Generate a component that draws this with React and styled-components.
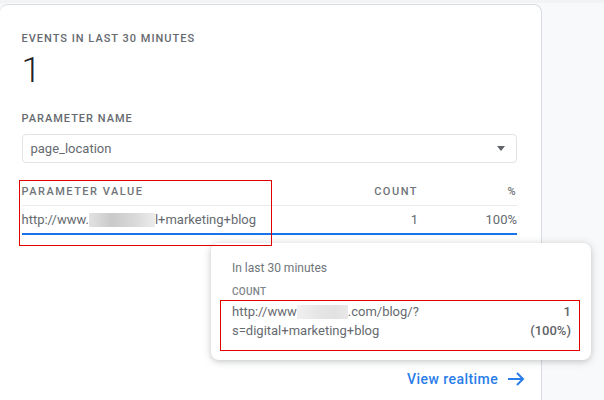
import React from "react";
import styled, { createGlobalStyle } from "styled-components";

const Global = createGlobalStyle`
  html, body { margin: 0; padding: 0; background: #f8f9fa; overflow: hidden; }
  body { font-family: Roboto, "Liberation Sans", sans-serif; width: 604px; height: 400px; }
`;

const Page = styled.div`
  position: relative;
  width: 604px;
  height: 400px;
  overflow: hidden;
  background: #f8f9fa;
  border-top: 3px solid #f1f3f4;
  box-sizing: border-box;
`;

const Card = styled.section`
  box-sizing: border-box;
  width: 542px;
  height: 420px;
  margin: 1px 0 0 0;
  padding: 27px 24px 0 21.5px;
  background: #fff;
  border: 1px solid #dadce0;
  border-left: 0;
  border-radius: 8px;
  display: flex;
  flex-direction: column;
`;

const Label = styled.div`
  font-size: 11px;
  line-height: 14px;
  font-weight: 500;
  letter-spacing: 1px;
  color: #666a6f;
  text-transform: uppercase;
`;

const BigNumber = styled.div`
  font-size: 35px;
  line-height: 40px;
  font-weight: 300;
  color: #202124;
  margin: 5px 0 21px;
`;

const Select = styled.div`
  box-sizing: border-box;
  height: 29px;
  margin-top: 8px;
  padding: 0 11px 0 8px;
  display: flex;
  align-items: center;
  justify-content: space-between;
  border: 1px solid #e1e3e6;
  border-radius: 4px;
  font-size: 13px;
  color: #666a6f;
`;

const Caret = styled.span`
  width: 0;
  height: 0;
  border-left: 4.5px solid transparent;
  border-right: 4.5px solid transparent;
  border-top: 5px solid #5f6368;
`;

const Table = styled.div`
  margin-top: 14px;
  display: flex;
  flex-direction: column;
`;

const HeadRow = styled.div`
  display: grid;
  grid-template-columns: 1fr 70px 99px;
  align-items: center;
  height: 28px;
  border-bottom: 1px solid #e8eaed;
`;

const BodyRow = styled.div`
  display: grid;
  grid-template-columns: 1fr 70px 99px;
  align-items: center;
  height: 27px;
  border-bottom: 2px solid #1a73e8;
`;

const HeadCell = styled.div`
  font-size: 11px;
  font-weight: 500;
  letter-spacing: 1.5px;
  color: #707478;
  text-align: ${(p) => (p.$end ? "right" : "left")};
`;

const Cell = styled.div`
  display: flex;
  align-items: center;
  justify-content: ${(p) => (p.$end ? "flex-end" : "flex-start")};
  font-size: 13px;
  color: #666a6f;
  white-space: nowrap;
`;

const Blur = styled.span`
  display: inline-block;
  width: ${(p) => p.$w}px;
  height: 14px;
  background: ${(p) =>
    p.$light
      ? "linear-gradient(90deg, #f0f0f0, #e6e6e6 40%, #e2e2e2 75%, #e8e8e8)"
      : "linear-gradient(90deg, #e2e2e2, #c9c9c9 35%, #dcdcdc 75%, #ececec)"};
  filter: blur(0.6px);
`;

const Footer = styled.a`
  position: absolute;
  left: 407px;
  top: 366px;
  display: flex;
  align-items: center;
  gap: 9px;
  font-size: 14px;
  font-weight: 500;
  letter-spacing: 0.45px;
  line-height: 20px;
  color: #2a7de9;
`;

const Tooltip = styled.div`
  position: absolute;
  left: 211px;
  top: 240px;
  width: 380px;
  height: 117px;
  box-sizing: border-box;
  padding: 18px 20px 0 21px;
  background: #fff;
  border-radius: 8px;
  box-shadow: 0 1px 8px rgba(60, 64, 67, 0.22), 0 2px 4px rgba(60, 64, 67, 0.1);
`;

const TipTitle = styled.div`
  font-size: 12px;
  line-height: 14px;
  color: #70757a;
`;

const TipLabel = styled.div`
  margin-top: 11px;
  font-size: 10px;
  line-height: 12px;
  font-weight: 500;
  letter-spacing: 0.3px;
  color: #80868b;
`;

const TipRow = styled.div`
  display: flex;
  justify-content: space-between;
  margin-top: 4px;
  font-size: 13px;
  line-height: 19px;
  color: #666a6f;
`;

const TipUrl = styled.div`
  display: flex;
  flex-direction: column;
`;

const TipLine = styled.div`
  display: flex;
  align-items: center;
`;

const TipValue = styled.div`
  text-align: right;
  font-weight: 500;
  color: #5f6368;
`;

const Annotation = styled.div`
  position: absolute;
  left: ${(p) => p.$x}px;
  top: ${(p) => p.$y}px;
  width: ${(p) => p.$w}px;
  height: ${(p) => p.$h}px;
  box-sizing: border-box;
  border: 1px solid #e00000;
  pointer-events: none;
`;

export default function App() {
  return (
    <Page>
      <Global />
      <Card>
        <Label>Events in last 30 minutes</Label>
        <BigNumber>1</BigNumber>
        <Label>Parameter name</Label>
        <Select>
          page_location
          <Caret />
        </Select>
        <Table>
          <HeadRow>
            <HeadCell>PARAMETER VALUE</HeadCell>
            <HeadCell $end>COUNT</HeadCell>
            <HeadCell $end>%</HeadCell>
          </HeadRow>
          <BodyRow>
            <Cell>
              http://www.
              <Blur $w={66} />
              l+marketing+blog
            </Cell>
            <Cell $end>1</Cell>
            <Cell $end>100%</Cell>
          </BodyRow>
        </Table>
      </Card>
      <Footer>
        View realtime
        <svg width="18" height="14" viewBox="0 0 18 14" fill="none" stroke="#2a7de9" strokeWidth="2">
          <path d="M1 7h15M10 1l6 6-6 6" />
        </svg>
      </Footer>
      <Tooltip>
        <TipTitle>In last 30 minutes</TipTitle>
        <TipLabel>COUNT</TipLabel>
        <TipRow>
          <TipUrl>
            <TipLine>
              http://www
              <Blur $w={51} $light />
              .com/blog/?
            </TipLine>
            <TipLine>s=digital+marketing+blog</TipLine>
          </TipUrl>
          <TipValue>
            1
            <br />
            (100%)
          </TipValue>
        </TipRow>
      </Tooltip>
      <Annotation $x={19} $y={177} $w={253} $h={66} />
      <Annotation $x={220} $y={297} $w={360} $h={51} />
    </Page>
  );
}
